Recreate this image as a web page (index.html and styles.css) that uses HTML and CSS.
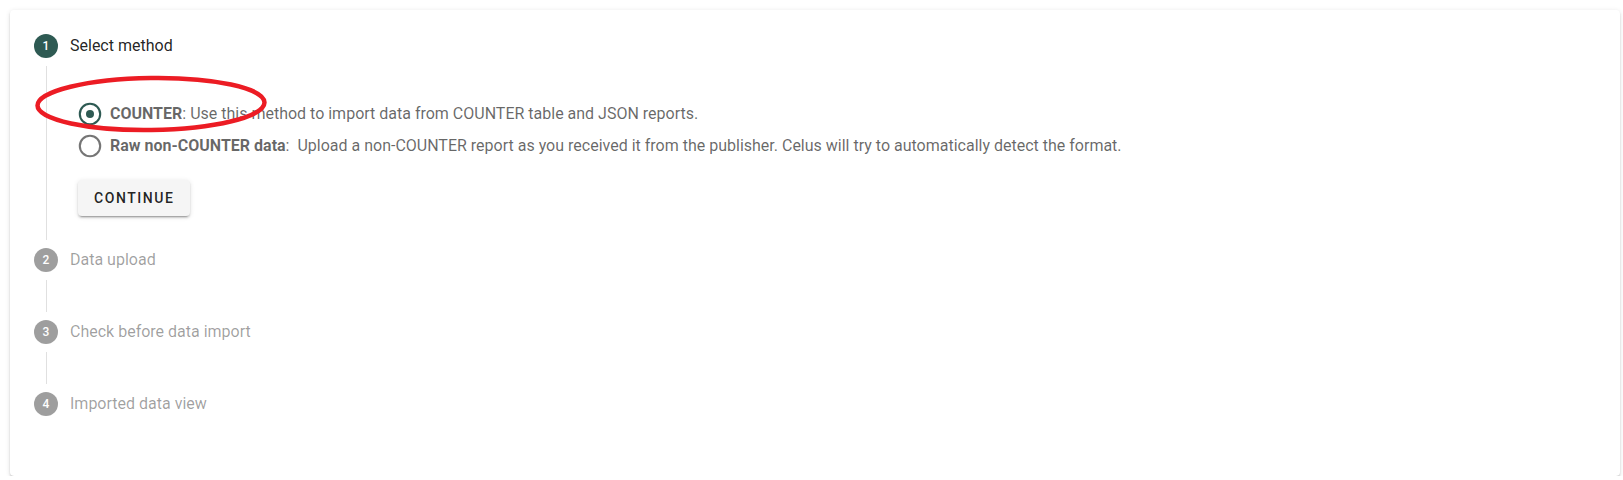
FILE: index.html
```html
<!DOCTYPE html>
<html lang="en">
<head>
<meta charset="utf-8">
<title>Import data</title>
<link rel="stylesheet" href="styles.css">
</head>
<body>
<div class="page">
  <div class="card stepper">
    <div class="step">
      <div class="step-head first">
        <span class="step-num active">1</span>
        <span class="step-label active">Select method</span>
      </div>
      <div class="step-content">
        <div class="radio-group">
          <label class="radio">
            <svg class="radio-icon checked" viewBox="0 0 24 24" width="24" height="24"><circle cx="12" cy="12" r="10.2" fill="none" stroke="currentColor" stroke-width="2.1"/><circle cx="12" cy="12" r="4" fill="currentColor"/></svg>
            <span class="radio-text"><b>COUNTER</b>: Use this method to import data from COUNTER table and JSON reports.</span>
          </label>
          <label class="radio">
            <svg class="radio-icon" viewBox="0 0 24 24" width="24" height="24"><circle cx="12" cy="12" r="10.2" fill="none" stroke="currentColor" stroke-width="2.1"/></svg>
            <span class="radio-text"><b>Raw non-COUNTER data</b>:&nbsp; Upload a non-COUNTER report as you received it from the publisher. Celus will try to automatically detect the format.</span>
          </label>
        </div>
        <button class="btn" type="button">Continue</button>
      </div>
    </div>
    <div class="step">
      <div class="step-head">
        <span class="step-num">2</span>
        <span class="step-label">Data upload</span>
      </div>
      <div class="connector"></div>
    </div>
    <div class="step">
      <div class="step-head">
        <span class="step-num">3</span>
        <span class="step-label">Check before data import</span>
      </div>
      <div class="connector"></div>
    </div>
    <div class="step">
      <div class="step-head last">
        <span class="step-num">4</span>
        <span class="step-label">Imported data view</span>
      </div>
    </div>
  </div>
  <svg class="annotation" width="240" height="64" viewBox="0 0 240 64"><ellipse cx="120" cy="32" rx="113.5" ry="26" fill="none" stroke="#ec1c24" stroke-width="4.5" transform="rotate(-0.8 120 32)"/></svg>
</div>
</body>
</html>
```

FILE: styles.css
```css
html, body {
  margin: 0;
  padding: 0;
  background: #ffffff;
}

body {
  font-family: Roboto, "Liberation Sans", Arial, sans-serif;
  -webkit-font-smoothing: antialiased;
}

.page {
  position: relative;
  padding: 10px 3px 0 10px;
}

.card {
  background: #ffffff;
  border-radius: 4px;
  box-shadow: 0 3px 1px -2px rgba(0, 0, 0, 0.2), 0 2px 2px 0 rgba(0, 0, 0, 0.14), 0 1px 5px 0 rgba(0, 0, 0, 0.12);
  padding-bottom: 36px;
}

.step-head {
  display: flex;
  align-items: center;
  padding: 8px 24px;
  height: 24px;
}

.step-head.first {
  padding-top: 24px;
}

.step-head.last {
  padding-bottom: 24px;
}

.step-num {
  width: 24px;
  height: 24px;
  min-width: 24px;
  border-radius: 50%;
  background: rgba(0, 0, 0, 0.38);
  color: #ffffff;
  font-size: 12px;
  font-weight: 500;
  display: flex;
  align-items: center;
  justify-content: center;
  margin-right: 12px;
}

.step-num.active {
  background: #2e5a53;
}

.step-label {
  font-size: 16px;
  line-height: 20px;
  color: rgba(0, 0, 0, 0.38);
}

.step-label.active {
  color: rgba(0, 0, 0, 0.87);
}

.step-content {
  margin-left: 36px;
  border-left: 1px solid rgba(0, 0, 0, 0.12);
  padding: 36px 24px 24px 30px;
  display: flex;
  flex-direction: column;
  align-items: flex-start;
}

.connector {
  margin-left: 36px;
  border-left: 1px solid rgba(0, 0, 0, 0.12);
  height: 32px;
}

.radio-group {
  display: flex;
  flex-direction: column;
  gap: 8px;
  padding-left: 1px;
}

.radio {
  display: flex;
  align-items: center;
  height: 24px;
}

.radio-icon {
  display: block;
  width: 24px;
  height: 24px;
  margin-right: 8px;
  color: rgba(0, 0, 0, 0.54);
}

.radio-icon.checked {
  color: #2e5a53;
}

.radio-text {
  font-size: 16px;
  line-height: 24px;
  color: rgba(0, 0, 0, 0.6);
  white-space: nowrap;
}

.radio-text b {
  font-weight: 700;
}

.btn {
  margin-top: 22px;
  margin-left: 1px;
  height: 36px;
  padding: 0 16px;
  min-width: 64px;
  border: none;
  border-radius: 4px;
  background: #f5f5f5;
  color: rgba(0, 0, 0, 0.87);
  font-family: Roboto, "Liberation Sans", Arial, sans-serif;
  font-size: 14px;
  font-weight: 500;
  letter-spacing: 1.55px;
  text-transform: uppercase;
  box-shadow: 0 3px 1px -2px rgba(0, 0, 0, 0.2), 0 2px 2px 0 rgba(0, 0, 0, 0.14), 0 1px 5px 0 rgba(0, 0, 0, 0.12);
}

.annotation {
  position: absolute;
  left: 31px;
  top: 72px;
  overflow: visible;
}
```
